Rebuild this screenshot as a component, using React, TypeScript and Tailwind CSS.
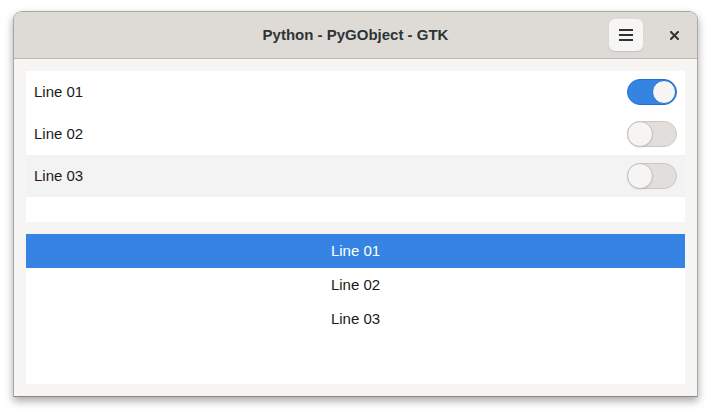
import React from "react";

function Switch({ on }: { on: boolean }) {
  return on ? (
    <div className="w-[50px] h-[26px] rounded-full bg-[#3584e4] border border-[#1f6fd2] flex items-center justify-end">
      <div className="w-[24px] h-[24px] rounded-full bg-[#f6f5f4] border border-[#1f6fd2]" />
    </div>
  ) : (
    <div className="w-[50px] h-[26px] rounded-full bg-[#e1dedb] border border-[#cdc7c2] flex items-center justify-start">
      <div className="w-[26px] h-[26px] -ml-px rounded-full bg-[#f6f5f4] border border-[#c5bfba] shadow-[0_1px_1px_rgba(0,0,0,0.08)]" />
    </div>
  );
}

export default function App() {
  const rows = [
    { label: "Line 01", on: true, bg: "bg-white" },
    { label: "Line 02", on: false, bg: "bg-white" },
    { label: "Line 03", on: false, bg: "bg-[#f3f3f3]" },
  ];
  return (
    <div
      className="w-[711px] h-[413px] bg-white pt-[11px] pl-[13px]"
      style={{ fontFamily: '"Liberation Sans", Arial, sans-serif' }}
    >
      <div className="w-[685px] h-[386px] flex flex-col rounded-t-[9px] border border-[#a9a6a3] border-b-[#8a8886] bg-[#f6f5f4] shadow-[0_4px_8px_rgba(0,0,0,0.35)] overflow-hidden">
        <div className="h-[47px] shrink-0 flex items-center bg-[#dedbd7] border-b border-[#bdb8b4] relative">
          <div className="flex-1 text-center text-[15px] font-bold text-[#2e3436]">
            Python - PyGObject - GTK
          </div>
          <div className="absolute right-[54px] top-[7px] w-[34px] h-[32px] rounded-[6px] bg-[#f7f6f5] shadow-[0_1px_1px_rgba(0,0,0,0.12)] flex items-center justify-center">
            <svg width="14" height="12" viewBox="0 0 14 12">
              <rect x="0" y="0" width="14" height="2" fill="#2e3436" />
              <rect x="0" y="5" width="14" height="2" fill="#2e3436" />
              <rect x="0" y="10" width="14" height="2" fill="#2e3436" />
            </svg>
          </div>
          <div className="absolute right-[18px] top-[18px] w-[10px] h-[10px] flex items-center justify-center">
            <svg width="9" height="9" viewBox="0 0 9 9">
              <path d="M1 1 L8 8 M8 1 L1 8" stroke="#2e3436" strokeWidth="2" strokeLinecap="square" />
            </svg>
          </div>
        </div>
        <div className="flex-1 flex flex-col gap-[12px] p-[12px]">
          <div className="bg-white flex flex-col">
            {rows.map((r) => (
              <div key={r.label} className={`h-[42px] flex items-center justify-between px-[8px] ${r.bg}`}>
                <span className="text-[15px] text-[#1a1a1a]">{r.label}</span>
                <Switch on={r.on} />
              </div>
            ))}
            <div className="h-[25px]" />
          </div>
          <div className="bg-white flex-1 flex flex-col">
            <div className="h-[34px] flex items-center justify-center bg-[#3584e4] text-white text-[15px]">Line 01</div>
            <div className="h-[34px] flex items-center justify-center text-[#1a1a1a] text-[15px]">Line 02</div>
            <div className="h-[34px] flex items-center justify-center text-[#1a1a1a] text-[15px]">Line 03</div>
          </div>
        </div>
      </div>
    </div>
  );
}
